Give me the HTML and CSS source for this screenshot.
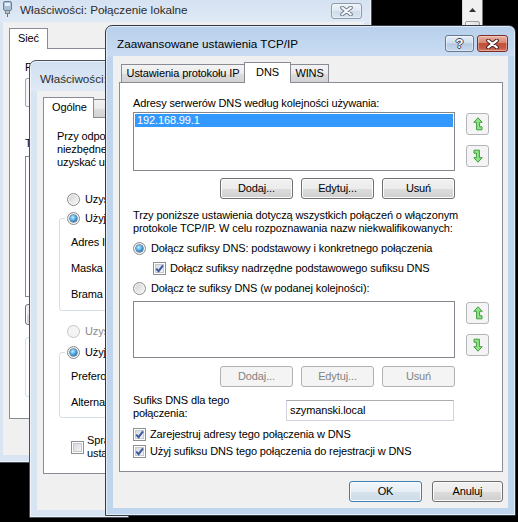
FILE: index.html
```html
<!DOCTYPE html>
<html lang="pl">
<head>
<meta charset="utf-8">
<title>Zaawansowane ustawienia TCP/IP</title>
<link rel="stylesheet" href="styles.css">
</head>
<body>
<div class="desktop">
  <div class="bgscroll">
    <div class="sb-arrow"><svg width="7" height="4" viewBox="0 0 7 4"><path d="M0 4 3.5 0 7 4Z" fill="#333"/></svg></div>
    <div class="sb-thumb"></div>
  </div>

  <!-- Window 1 -->
  <div class="win inactive w1">
    <div class="titlebar">
      <svg class="ticon" width="9" height="16" viewBox="0 0 9 16"><rect x="0.5" y="0.5" width="8" height="9" rx="1.5" fill="#a9c1d8" stroke="#6d7f92"/><rect x="2" y="2" width="5" height="3" fill="#e4eef7"/><rect x="2.5" y="9.5" width="4" height="3" fill="#b9c0c7" stroke="#7b8590"/><path d="M4.5 12.5V16" stroke="#6d747c"/></svg>
      <span class="title t1">Właściwości: Połączenie lokalne</span>
      <div class="capbtns c1">
        <div class="cap close ia"><svg width="13" height="10" viewBox="0 0 13 10"><path d="M2.2 1.6 10.8 8.4M10.8 1.6 2.2 8.4" stroke="#6f7c8b" stroke-width="4" stroke-linecap="round"/><path d="M2.2 1.6 10.8 8.4M10.8 1.6 2.2 8.4" stroke="#f4f7fb" stroke-width="2.2" stroke-linecap="round"/></svg></div>
      </div>
    </div>
    <div class="client">
      <div class="tabs"><div class="tab sel">Sieć</div></div>
      <div class="panel p1">
        <div class="line fit">Połącz, używając:</div>
        <div class="adapter"></div>
        <div class="line fit l-ten">Ten składnik jest używany przez to połączenie:</div>
        <div class="items"></div>
        <div class="btn b-inst"></div>
        <div class="opis"></div>
      </div>
      <div class="foot"></div>
    </div>
  </div>

  <!-- Window 2 -->
  <div class="win inactive w2">
    <div class="titlebar">
      <span class="title t2">Właściwości: Protokół internetowy w wersji 4 (TCP/IPv4)</span>
    </div>
    <div class="client">
      <div class="tabs"><div class="tab sel t-og">Ogólne</div><div class="tab t-alt">Konfiguracja alternatywna</div></div>
      <div class="panel p2">
        <p class="para fit">Przy odpowiedniej konfiguracji sieci możesz automatycznie uzyskać<br>niezbędne ustawienia protokołu IP. W przeciwnym wypadku musisz<br>uzyskać ustawienia protokołu IP od administratora sieci.</p>
        <div class="opt fit o-auto"><span class="radio"></span>Uzyskaj adres IP automatycznie</div>
        <fieldset class="grp g1">
          <legend><span class="radio on"></span>Użyj następującego adresu IP:</legend>
          <div class="frows">
            <div class="frow">Adres IP:</div>
            <div class="frow">Maska podsieci:</div>
            <div class="frow">Brama domyślna:</div>
          </div>
        </fieldset>
        <div class="opt fit o-dns dis"><span class="radio"></span>Uzyskaj adres serwera DNS automatycznie</div>
        <fieldset class="grp g2">
          <legend><span class="radio on"></span>Użyj następujących adresów serwerów DNS:</legend>
          <div class="frows">
            <div class="frow">Preferowany serwer DNS:</div>
            <div class="frow">Alternatywny serwer DNS:</div>
          </div>
        </fieldset>
        <div class="chkrow fit"><span class="check"></span><span>Sprawdź poprawność<br>ustawień przy zakończeniu</span></div>
      </div>
      <div class="foot"></div>
    </div>
  </div>

  <!-- Window 3 -->
  <div class="win active w3">
    <div class="titlebar">
      <span class="title t3">Zaawansowane ustawienia TCP/IP</span>
      <div class="capbtns c3">
        <div class="cap help"><span>?</span></div>
        <div class="cap close"><svg width="13" height="10" viewBox="0 0 13 10"><path d="M2.2 1.6 10.8 8.4M10.8 1.6 2.2 8.4" stroke="#3e2020" stroke-width="4" stroke-linecap="round"/><path d="M2.2 1.6 10.8 8.4M10.8 1.6 2.2 8.4" stroke="#fff" stroke-width="2.2" stroke-linecap="round"/></svg></div>
      </div>
    </div>
    <div class="client">
      <div class="tabs">
        <div class="tab t-ip">Ustawienia protokołu IP</div>
        <div class="tab sel t-dns">DNS</div>
        <div class="tab t-wins">WINS</div>
      </div>
      <div class="panel dns">
        <div class="line">Adresy serwerów DNS według kolejności używania:</div>
        <div class="listrow r-a">
          <div class="listbox lb1"><div class="selrow">192.168.99.1</div></div>
          <div class="arrows">
            <div class="mv"><svg width="10" height="14" viewBox="0 0 10 14"><path d="M5 .8 9.2 5.3H6.6V9.8H9V12.8H3.6V5.3H.8Z" fill="#8ee486" stroke="#3f9f3f" stroke-linejoin="round"/></svg></div>
            <div class="mv"><svg width="10" height="14" viewBox="0 0 10 14"><path d="M1 1.2H6.4V8.7H9.2L5 13.2.8 8.7H3.4V4.2H1Z" fill="#8ee486" stroke="#3f9f3f" stroke-linejoin="round"/></svg></div>
          </div>
        </div>
        <div class="btnrow b-a"><div class="btn">Dodaj...</div><div class="btn">Edytuj...</div><div class="btn">Usuń</div></div>
        <p class="para p-dns">Trzy poniższe ustawienia dotyczą wszystkich połączeń o włączonym<br>protokole TCP/IP. W celu rozpoznawania nazw niekwalifikowanych:</p>
        <div class="opt o1"><span class="radio on"></span>Dołącz sufiksy DNS: podstawowy i konkretnego połączenia</div>
        <div class="opt o2"><span class="check on"><svg width="9" height="9" viewBox="0 0 9 9"><path d="M1.2 4.6 3.6 7.2 8 1.4" fill="none" stroke="#3b5aa0" stroke-width="2"/></svg></span>Dołącz sufiksy nadrzędne podstawowego sufiksu DNS</div>
        <div class="opt o3"><span class="radio"></span>Dołącz te sufiksy DNS (w podanej kolejności):</div>
        <div class="listrow r-b">
          <div class="listbox lb2"></div>
          <div class="arrows">
            <div class="mv"><svg width="10" height="14" viewBox="0 0 10 14"><path d="M5 .8 9.2 5.3H6.6V9.8H9V12.8H3.6V5.3H.8Z" fill="#8ee486" stroke="#3f9f3f" stroke-linejoin="round"/></svg></div>
            <div class="mv"><svg width="10" height="14" viewBox="0 0 10 14"><path d="M1 1.2H6.4V8.7H9.2L5 13.2.8 8.7H3.4V4.2H1Z" fill="#8ee486" stroke="#3f9f3f" stroke-linejoin="round"/></svg></div>
          </div>
        </div>
        <div class="btnrow b-b"><div class="btn dis">Dodaj...</div><div class="btn dis">Edytuj...</div><div class="btn dis">Usuń</div></div>
        <div class="suffix">
          <div class="slabel">Sufiks DNS dla tego<br>połączenia:</div>
          <div class="input">szymanski.local</div>
        </div>
        <div class="opt o4"><span class="check on"><svg width="9" height="9" viewBox="0 0 9 9"><path d="M1.2 4.6 3.6 7.2 8 1.4" fill="none" stroke="#3b5aa0" stroke-width="2"/></svg></span>Zarejestruj adresy tego połączenia w DNS</div>
        <div class="opt o5"><span class="check on"><svg width="9" height="9" viewBox="0 0 9 9"><path d="M1.2 4.6 3.6 7.2 8 1.4" fill="none" stroke="#3b5aa0" stroke-width="2"/></svg></span>Użyj sufiksu DNS tego połączenia do rejestracji w DNS</div>
      </div>
      <div class="foot"><div class="btn def">OK</div><div class="btn b-cancel">Anuluj</div></div>
    </div>
  </div>
</div>
</body>
</html>
```
FILE: styles.css
```css
* { box-sizing: border-box; margin: 0; padding: 0; }
html, body { width: 518px; height: 522px; overflow: hidden; background: #000; }
body {
  font-family: "Liberation Sans", Arial, sans-serif;
  font-size: 11px;
  line-height: 13px;
  letter-spacing: -0.12px;
  color: #000;
}
.desktop { position: relative; width: 518px; height: 522px; overflow: hidden; background: #000; }

/* background scrollbar peeking out on the desktop */
.bgscroll {
  position: absolute; left: 462px; top: 0; width: 21px; height: 30px;
  background: #f0f0f0; border-left: 1px solid #dadada; border-right: 1px solid #7a7a7a;
}
.sb-arrow { height: 20px; display: flex; align-items: center; justify-content: center; }
.sb-thumb { margin: 1px 2px 0; height: 14px; border: 1px solid #9a9a9a; border-radius: 2px; background: linear-gradient(to right, #f4f4f4, #dedede); }

/* windows */
.win {
  position: absolute; display: flex; flex-direction: column;
  border: 1px solid #4a535d; border-radius: 7px 7px 0 0;
  padding: 0 7px 7px;
  box-shadow: inset 0 0 0 1px rgba(255,255,255,0.55);
}
.win.active { background: linear-gradient(#b8d0ec 0, #c9dcf2 30px, #bfd5ee 31px, #bfd5ee 100%); border-color: #333a42; }
.win.inactive { background: linear-gradient(#d1dff0 0, #e0eaf6 30px, #d8e4f2 31px, #d8e4f2 100%); }
.w1 { left: -5px; top: -9px; width: 377px; height: 472px; z-index: 1; }
.w2 { left: 29px; top: 60px; width: 100px; height: 458px; z-index: 2; overflow: hidden; }
.w3 { left: 105px; top: 25px; width: 411px; height: 491px; z-index: 3; }

.titlebar { height: 30px; flex: none; display: flex; align-items: flex-start; overflow: hidden; }
.title { padding-top: 11px; font-size: 11.7px; line-height: 14px; letter-spacing: 0; white-space: nowrap; }
.win.inactive .title { color: #2c2c2c; }
.ticon { margin: 9px 0 0 0; flex: none; }
.t1 { margin-left: 8px; }
.t2 { margin-left: 3px; }
.t3 { margin-left: 4px; }
.capbtns { margin-left: auto; display: flex; gap: 3px; flex: none; }
.c1 { margin-top: 11px; margin-right: 2px; }
.c3 { margin-top: 9px; }
.cap { height: 17px; border-radius: 3px; display: flex; align-items: center; justify-content: center; }
.cap.close { width: 31px; border: 1px solid #7b2d22; background: linear-gradient(#eab0a2 0, #d98672 45%, #c5503a 50%, #c55a44 80%, #d77d68 100%); box-shadow: inset 0 0 0 1px rgba(255,255,255,0.35); }
.cap.close.ia { width: 31px; height: 16px; border-color: #8d9bab; background: linear-gradient(#eef3f9 0, #dfe8f2 48%, #d0dceb 52%, #dae5f1 100%); }
.cap.help { width: 29px; border: 1px solid #68788d; background: linear-gradient(#e6eef8 0, #cfdeee 45%, #b5cae2 52%, #c6d9ee 100%); box-shadow: inset 0 0 0 1px rgba(255,255,255,0.45); }
.cap.help span { color: #fff; font-weight: bold; font-size: 13px; line-height: 15px; text-shadow: 1px 0 #3c4452, -1px 0 #3c4452, 0 1px #3c4452, 0 -1px #3c4452; }

.client { flex: 1; min-height: 0; background: #f0f0f0; padding: 6px 5px 6px 6px; display: flex; flex-direction: column; }
.w2 .client { overflow: hidden; }

/* tabs */
.tabs { height: 20px; flex: none; display: flex; align-items: flex-end; padding-left: 2px; position: relative; z-index: 1; }
.tab {
  flex: none;
  height: 18px; border: 1px solid #898c95; border-bottom: none;
  background: linear-gradient(#f3f3f3, #ebebeb 50%, #dedede 51%, #d2d2d2);
  padding: 0 6px; line-height: 16px; white-space: nowrap; text-align: center;
}
.tab.sel { height: 21px; background: #fff; margin: 0 -2px -1px -2px; line-height: 19px; padding: 0 8px; }
.tabs .tab + .tab { margin-left: -1px; }
.tabs .tab.sel + .tab { margin-left: 1px; }
.t-ip { width: 124px; padding: 0; }
.t-dns { width: 47px; padding: 0; }
.t-wins { width: 39px; padding: 0; }
.t-alt { padding: 0 8px 0 14px; }

.panel { flex: 1; min-height: 0; background: #fff; border: 1px solid #898c95; overflow: hidden; }

.foot { flex: none; margin-top: 9px; height: 21px; display: flex; justify-content: flex-end; gap: 10px; }
.foot .btn { width: 73px; flex: none; }
.foot .b-cancel { width: 71px; }

/* buttons */
.btn {
  height: 21px; width: 73px; border: 1px solid #707070; border-radius: 3px;
  background: linear-gradient(#f2f2f2, #ebebeb 50%, #dddddd 51%, #cfcfcf);
  box-shadow: inset 0 0 0 1px #fbfbfb;
  display: flex; align-items: center; justify-content: center; white-space: nowrap;
}
.btn.dis { border-color: #adb2b5; background: #f4f4f4; color: #838383; box-shadow: none; }
.btn.def { border-color: #3c7fb1; background: linear-gradient(#f1f6fa, #e6eef5 50%, #d7e3ed 51%, #cbdbe8); box-shadow: inset 0 0 0 1px #f9fbfd; }

.line { height: 13px; white-space: nowrap; }
.para { white-space: nowrap; }
.fit { width: max-content; }

/* option rows */
.opt { height: 13px; display: flex; align-items: center; white-space: nowrap; }
.opt .radio { margin-right: 5px; }
.opt .check { margin-right: 4px; }
.opt.dis { color: #8a8a8a; }

.radio {
  flex: none; width: 13px; height: 13px; border-radius: 50%;
  border: 1px solid #8c8c8c; background: linear-gradient(135deg, #cfcfcf, #fbfbfb);
  box-shadow: inset 0 0 0 1px #f6f6f6;
  display: flex; align-items: center; justify-content: center;
}
.radio.on::after {
  content: ""; width: 7px; height: 7px; border-radius: 50%;
  background: radial-gradient(circle at 40% 35%, #c8eeff 0, #5ab5ec 40%, #1d5f97 85%);
  box-shadow: 0 0 0 0.5px #214f7c;
}
.opt.dis .radio { border-color: #c4c4c4; background: #f4f4f4; }

.check {
  flex: none; width: 13px; height: 13px; border: 1px solid #8e8f8f;
  background: linear-gradient(135deg, #d0d4da, #fafafa);
  box-shadow: inset 0 0 0 1px #fff, inset 0 0 0 2px #c4c9d0;
  display: flex; align-items: center; justify-content: center;
}

/* window 1 panel */
.p1 { padding: 12px 0 0 15px; }
.adapter { margin-top: 4px; height: 29px; width: 330px; border: 1px solid #a5a5a5; border-radius: 2px; background: #f7f7f7; }
.l-ten { margin-top: 30px; }
.items { margin-top: 6px; height: 141px; width: 330px; border: 1px solid #828790; }
.b-inst { margin-top: 7px; width: 90px; }
.opis { margin-top: 12px; height: 60px; width: 330px; border: 1px solid #d5dfe5; border-radius: 3px; }

/* window 2 panel */
.t-og { width: 51px; padding: 0; }
.p2 { padding: 12px 0 0 13px; }
.o-auto { margin: 24px 0 0 10px; }
.grp { border: 1px solid #d5dfe5; border-radius: 3px; margin: 6px 0 0 2px; width: 360px; padding: 7px 0 5px 11px; }
.grp legend { margin-left: -6px; padding: 0 2px; height: 13px; display: flex; align-items: center; white-space: nowrap; }
.grp legend .radio { margin-right: 5px; }
.frows { display: flex; flex-direction: column; align-items: flex-start; gap: 5px; }
.frow { height: 21px; display: flex; align-items: center; white-space: nowrap; }
.g2 { margin-top: 8px; padding-bottom: 4px; }
.o-dns { margin: 14px 0 0 10px; }
.chkrow { margin: 16px 0 0 14px; display: flex; align-items: center; white-space: nowrap; }
.chkrow .check { margin-right: 3px; }

/* window 3 DNS panel */
.dns { padding: 14px 13px 0 13px; }
.listrow { display: flex; align-items: flex-start; }
.r-a { margin-top: 2px; }
.listbox { width: 322px; border: 1px solid #828790; background: #fff; margin-right: 11px; }
.lb1 { height: 59px; padding: 1px; }
.lb2 { height: 57px; }
.selrow { height: 13px; background: #3399ff; color: #fff; padding-left: 2px; line-height: 13px; }
.arrows { margin-top: 1px; display: flex; flex-direction: column; gap: 10px; }
.mv { width: 23px; height: 22px; border: 1px solid #b2b6b9; border-radius: 3px; background: #f4f4f4; display: flex; align-items: center; justify-content: center; }
.btnrow { width: 322px; display: flex; justify-content: flex-end; gap: 8px; }
.b-a { margin-top: 7px; }
.p-dns { margin-top: 10px; }
.o1 { margin-top: 7px; }
.o2 { margin: 7px 0 0 20px; }
.o3 { margin-top: 7px; }
.r-b { margin-top: 6px; }
.b-b { margin-top: 8px; }
.suffix { margin-top: 7px; display: flex; align-items: flex-start; }
.slabel { width: 153px; white-space: nowrap; }
.input {
  margin-top: 6px; width: 168px; height: 21px;
  border: 1px solid #d0d5dd; border-top-color: #abadb3;
  background: #fff; padding-left: 3px; line-height: 19px; white-space: nowrap;
}
.o4 { margin-top: 7px; }
.o5 { margin-top: 4px; }
```
